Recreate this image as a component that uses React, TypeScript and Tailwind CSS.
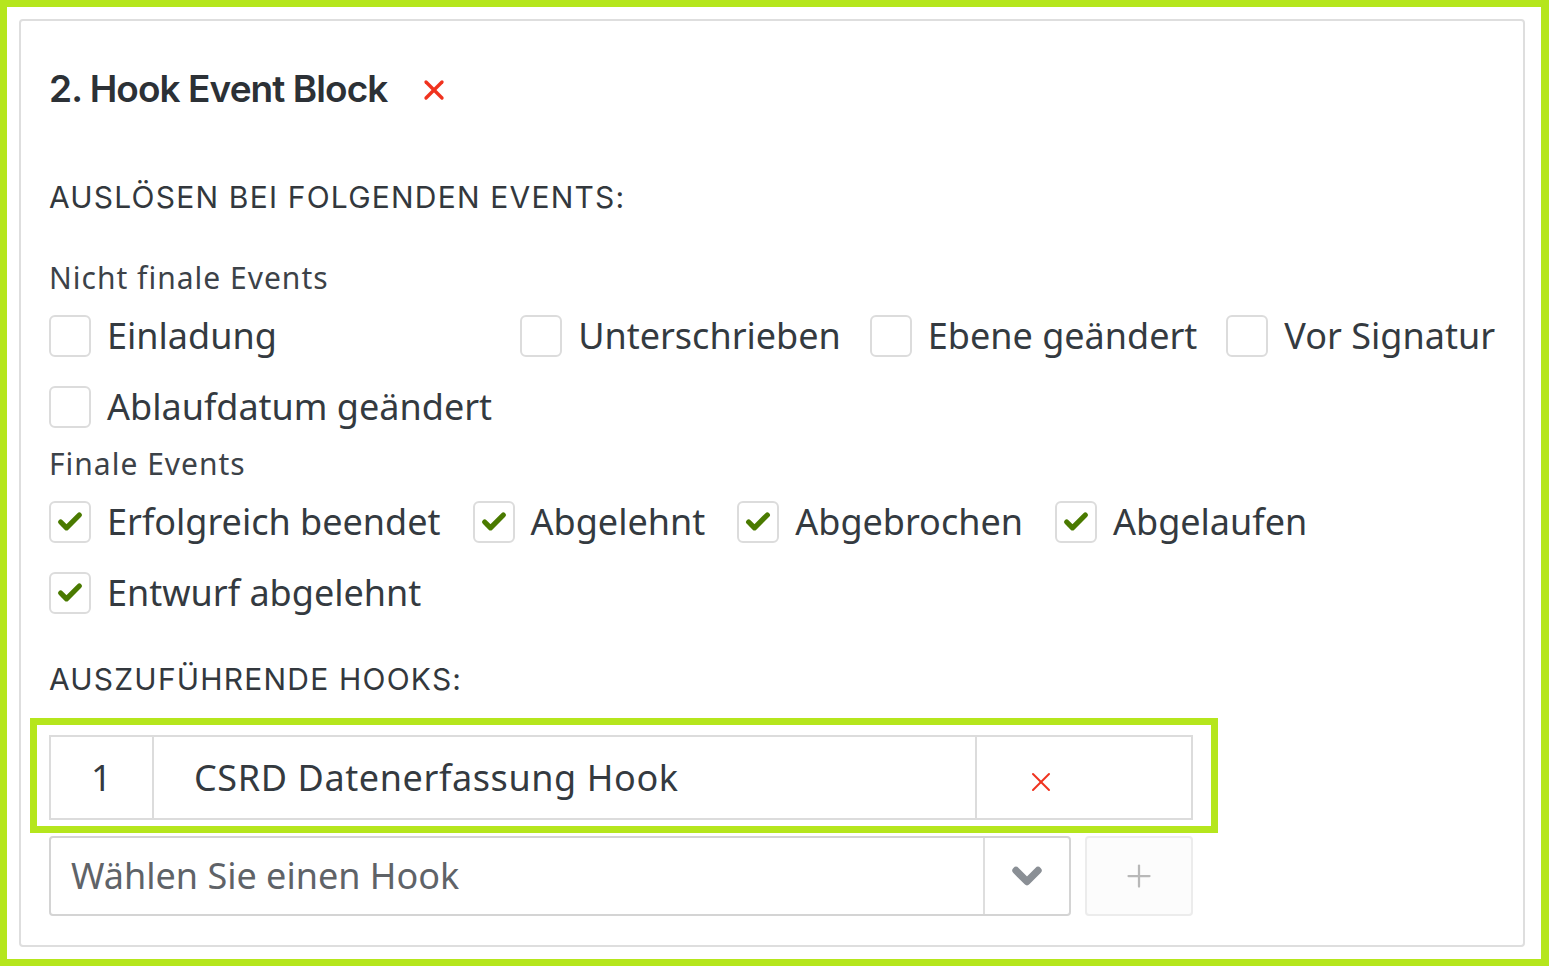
import { Check, X, ChevronDown, Plus } from 'lucide-react';

const body = { fontFamily: '"Noto Sans", "Open Sans", sans-serif' };
const head = { fontFamily: 'Inter, "Noto Sans", sans-serif' };

function Box({ label, checked, width }: { label: string; checked?: boolean; width?: string }) {
  return (
    <label className={`flex h-[42px] items-center gap-4 ${width ?? ''}`}>
      <span className="flex h-[42px] w-[42px] shrink-0 items-center justify-center rounded-md border-2 border-[#dcdcdc] bg-white">
        {checked && <Check className="h-7 w-7 text-[#4a7a00]" strokeWidth={4.5} />}
      </span>
      <span className="text-[36px] leading-none text-[#343a40] whitespace-nowrap" style={body}>
        {label}
      </span>
    </label>
  );
}

export default function App() {
  return (
    <div className="h-[966px] w-[1549px] bg-white border-[7px] border-r-[8px] border-[#b5e61d] pt-[12px] pl-[12px] pr-[16px] pb-[12px]">
      <div className="h-[928px] rounded border-2 border-[#dedede] px-[28px] pt-[49px]">
        <div className="flex h-[36px] items-center">
          <h2 className="text-[37px] leading-none font-semibold tracking-tight text-[#2c3136]" style={head}>
            2. Hook Event Block
          </h2>
          <X className="ml-[31px] mt-1 h-8 w-8 text-[#f0321e]" strokeWidth={2.5} />
        </div>

        <div className="mt-[76px] h-[30px] text-[30px] leading-[30px] tracking-[1.2px] text-[#33383d]" style={head}>
          AUSLÖSEN BEI FOLGENDEN EVENTS:
        </div>

        <div className="mt-[52px] h-[28px] text-[30px] leading-[28px] tracking-[1px] text-[#3c4248]" style={body}>
          Nicht finale Events
        </div>
        <div className="mt-[23px] flex flex-col gap-[29px]">
          <div className="flex gap-[29px]">
            <Box label="Einladung" width="w-[443px]" />
            <Box label="Unterschrieben" />
            <Box label="Ebene geändert" />
            <Box label="Vor Signatur" />
          </div>
          <Box label="Ablaufdatum geändert" />
        </div>

        <div className="mt-[22px] h-[28px] text-[30px] leading-[28px] tracking-[1px] text-[#3c4248]" style={body}>
          Finale Events
        </div>
        <div className="mt-[23px] flex flex-col gap-[29px]">
          <div className="flex gap-[32px]">
            <Box label="Erfolgreich beendet" checked />
            <Box label="Abgelehnt" checked />
            <Box label="Abgebrochen" checked />
            <Box label="Abgelaufen" checked />
          </div>
          <Box label="Entwurf abgelehnt" checked />
        </div>

        <div className="mt-[50px] h-[30px] text-[30px] leading-[30px] tracking-[1.2px] text-[#33383d]" style={head}>
          AUSZUFÜHRENDE HOOKS:
        </div>

        <div className="relative mt-[41px] w-[1144px]">
          <div className="flex h-[85px] border-2 border-[#dcdcdc] text-[36px] tracking-[0.6px] text-[#343a40]" style={body}>
            <div className="flex w-[103px] items-center justify-center border-r-2 border-[#dcdcdc]">1</div>
            <div className="flex flex-1 items-center border-r-2 border-[#dcdcdc] pl-[40px]">
              CSRD Datenerfassung Hook
            </div>
            <div className="flex w-[214px] items-center pl-[48px] pt-2">
              <X className="h-8 w-8 text-[#f0321e]" strokeWidth={1.5} />
            </div>
          </div>
          <div className="pointer-events-none absolute -left-[19px] -right-[25px] -top-[17px] -bottom-[13px] border-[7px] border-[#b5e61d]" />
        </div>

        <div className="mt-[16px] flex w-[1144px] gap-[14px]">
          <div className="flex h-[80px] flex-1 rounded border-2 border-[#d4d4d4]" style={body}>
            <div className="flex flex-1 items-center pl-[20px] text-[36px] text-[#5f6368]">
              Wählen Sie einen Hook
            </div>
            <div className="flex w-[86px] items-center justify-center border-l-2 border-[#dedede]">
              <ChevronDown className="h-11 w-11 text-[#8a8f95]" strokeWidth={4} />
            </div>
          </div>
          <div className="flex h-[80px] w-[108px] items-center justify-center rounded border-2 border-[#ececec] bg-[#fcfcfc]">
            <Plus className="h-9 w-9 text-[#b8b8b8]" strokeWidth={1.5} />
          </div>
        </div>
      </div>
    </div>
  );
}
